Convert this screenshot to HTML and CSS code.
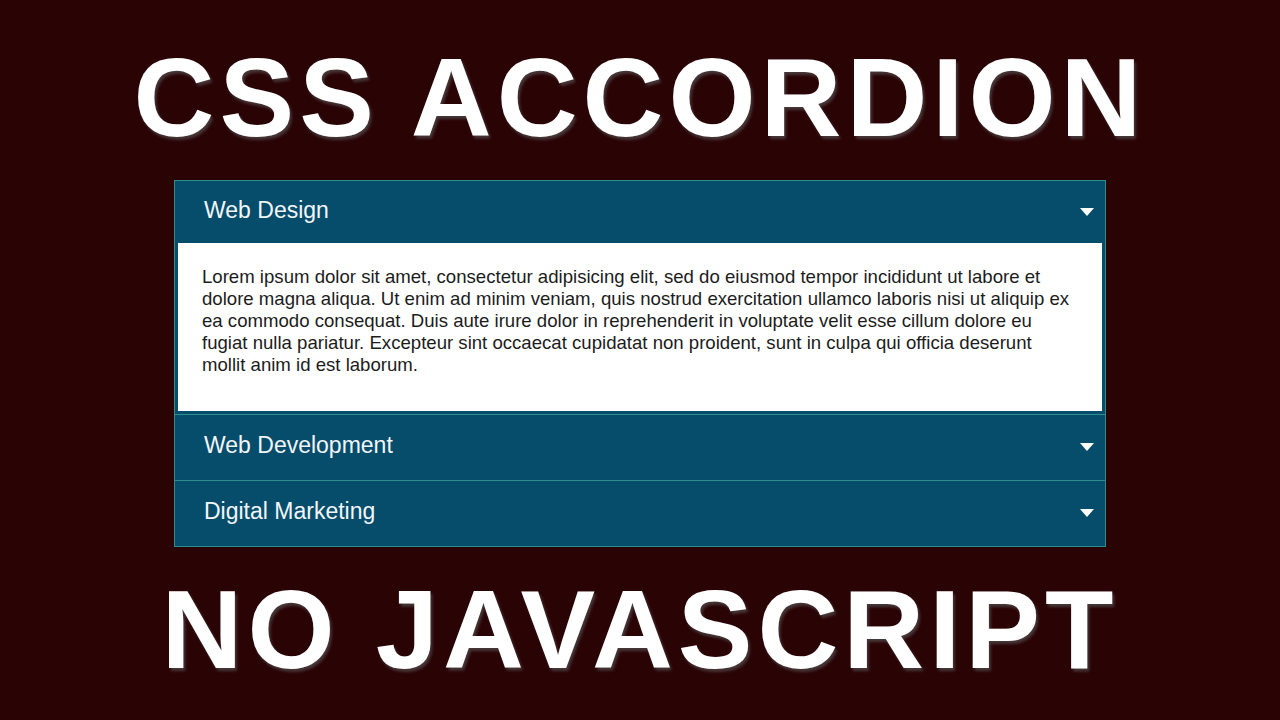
FILE: index.html
```html
<!DOCTYPE html>
<html lang="en">
<head>
    <meta charset="UTF-8">
    <meta name="viewport" content="width=device-width, initial-scale=1.0">
    <title>CSS Accordion - No JavaScript</title>
    <link rel="stylesheet" href="styles.css">
</head>
<body>
    <h1 class="title title-top">CSS ACCORDION</h1>

    <div class="accordion">
        <details class="item" open>
            <summary class="item-head">Web Design <span class="arrow"></span></summary>
            <div class="item-body">
                <p>Lorem ipsum dolor sit amet, consectetur adipisicing elit, sed do eiusmod tempor incididunt ut labore et dolore magna aliqua. Ut enim ad minim veniam, quis nostrud exercitation ullamco laboris nisi ut aliquip ex ea commodo consequat. Duis aute irure dolor in reprehenderit in voluptate velit esse cillum dolore eu fugiat nulla pariatur. Excepteur sint occaecat cupidatat non proident, sunt in culpa qui officia deserunt mollit anim id est laborum.</p>
            </div>
        </details>
        <details class="item">
            <summary class="item-head">Web Development <span class="arrow"></span></summary>
            <div class="item-body">
                <p>Lorem ipsum dolor sit amet, consectetur adipisicing elit, sed do eiusmod tempor incididunt ut labore et dolore magna aliqua.</p>
            </div>
        </details>
        <details class="item">
            <summary class="item-head">Digital Marketing <span class="arrow"></span></summary>
            <div class="item-body">
                <p>Lorem ipsum dolor sit amet, consectetur adipisicing elit, sed do eiusmod tempor incididunt ut labore et dolore magna aliqua.</p>
            </div>
        </details>
    </div>

    <h1 class="title title-bottom">NO JAVASCRIPT</h1>
</body>
</html>
```

FILE: styles.css
```css
body {
    margin: 0;
    padding-top: 42px;
    height: 720px;
    box-sizing: border-box;
    background-color: #2a0305;
    font-family: "Liberation Sans", Arial, sans-serif;
    overflow: hidden;
}

.title {
    margin: 0;
    font-size: 112px;
    line-height: 112px;
    font-weight: bold;
    letter-spacing: 5px;
    text-align: center;
    color: #ffffff;
    text-shadow: 2px 3px 3px rgba(90, 90, 90, 0.6);
}

.title-top {
    margin-bottom: 26px;
}

.title-bottom {
    margin-top: 27px;
}

/* accordion box */
.accordion {
    width: 930px;
    margin: 0 auto;
    border: 1px solid #2f8c8f;
    background-color: #064c6b;
}

.item {
    border-bottom: 1px solid #2f8c8f;
}

.item:last-child {
    border-bottom: none;
}

.item-head {
    list-style: none;
    display: flex;
    align-items: center;
    justify-content: space-between;
    padding: 18px 11px 22px 29px;
    font-size: 23px;
    line-height: 25px;
    color: #f2f6fa;
    cursor: pointer;
}

.item-head::-webkit-details-marker {
    display: none;
}

.item[open] .item-head {
    padding-top: 17px;
    padding-bottom: 20px;
}

/* little white triangle on the right */
.arrow {
    width: 0;
    height: 0;
    margin-top: 3px;
    border-left: 7px solid transparent;
    border-right: 7px solid transparent;
    border-top: 8px solid #ffffff;
}

.item-body {
    padding: 0 3px 3px;
}

.item-body p {
    margin: 0;
    padding: 23px 24px 35px;
    background-color: #ffffff;
    color: #1c1c1c;
    font-size: 18.6px;
    line-height: 22px;
}
```
